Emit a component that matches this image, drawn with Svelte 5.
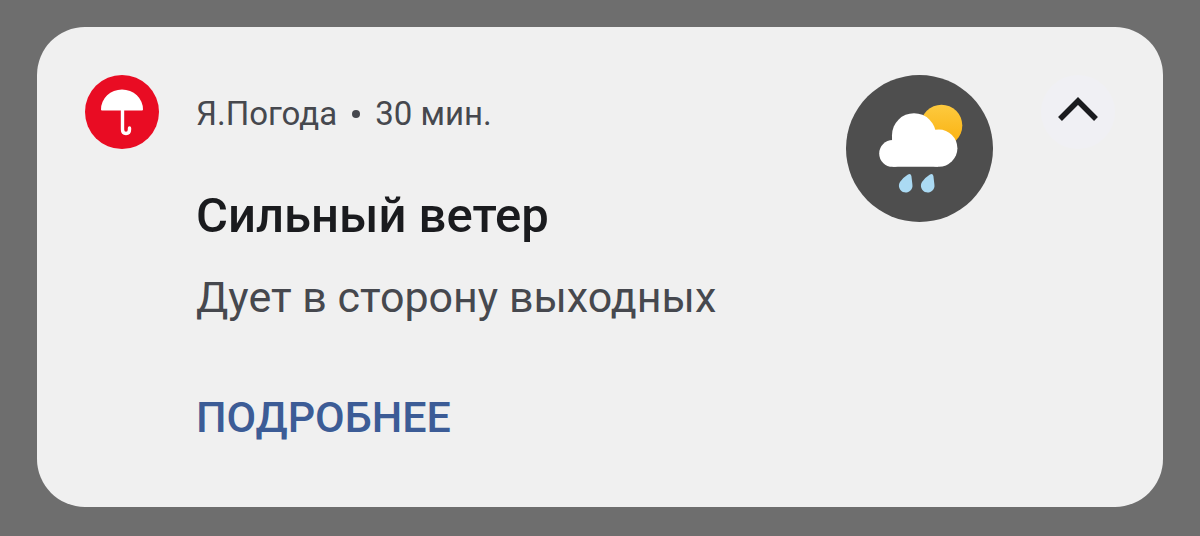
<svelte:options runes={true} />

<script>
  let expanded = $state(true);
</script>

<main class="shade">
  <article class="card">
    <svg class="app-icon" viewBox="0 0 74 74" aria-hidden="true">
      <circle cx="37" cy="37" r="37" fill="#e90c23" />
      <path d="M16 34.5a21 20 0 0 1 42 0q0 1-1 1H17q-1 0-1-1z" fill="#fff" />
      <path d="M37.5 34v20.500q0 4 3.500 4t3.500-4v-1.500" fill="none" stroke="#fff" stroke-width="3.400" stroke-linecap="round" />
    </svg>

    <div class="content">
      <p class="meta"><span>Я.Погода</span><span class="dot"></span><span>30 мин.</span></p>
      <h1>Сильный ветер</h1>
      <p class="message">Дует в сторону выходных</p>
      <a class="more" href="#details">ПОДРОБНЕЕ</a>
    </div>

    <svg class="weather" viewBox="0 0 147 147" aria-hidden="true">
      <defs>
        <linearGradient id="sun" x1="0" y1="0" x2="0" y2="1">
          <stop offset="0" stop-color="#fdca3f" />
          <stop offset="1" stop-color="#fab00d" />
        </linearGradient>
      </defs>
      <circle cx="73.500" cy="73.500" r="73.500" fill="#4e4e4e" />
      <circle cx="95.500" cy="50.500" r="20.800" fill="url(#sun)" />
      <g fill="#fff">
        <circle cx="68" cy="60.200" r="22" />
        <circle cx="46.600" cy="78.400" r="13.400" />
        <circle cx="92.800" cy="73.200" r="18.600" />
        <path d="M46 60H70l22 12v19.800H46.600z" />
      </g>
      <g fill="#abdaf3">
        <path id="drop" d="M61.600 99.800Q64.600 97.800 65.400 101L66.400 109.500A6.800 6.800 0 1 1 54 107Q56.500 103 61.600 99.800z" />
        <use href="#drop" x="22" />
      </g>
    </svg>

    <button class="toggle" aria-label="Свернуть" aria-expanded={expanded} onclick={() => (expanded = !expanded)}>
      <svg viewBox="0 0 48 48" aria-hidden="true"><path d="M6 31 24 13l18 18" /></svg>
    </button>
  </article>
</main>

<style>
  :global(body) { margin: 0; background: #6e6e6e; }
  .shade { padding: 27px 37px 29px; font-family: Roboto, sans-serif; }
  .card { display: flex; align-items: flex-start; box-sizing: border-box; padding: 48px 48px 64px; border-radius: 48px; background: #f0f0f0; }
  .app-icon { flex: none; width: 74px; height: 74px; }
  .content { flex: 1; min-width: 0; margin-left: 37px; }
  p, h1 { margin: 0; }
  .meta { display: flex; align-items: center; height: 78px; color: #46484e; font-size: 33px; line-height: 40px; }
  .dot { width: 8px; height: 8px; margin: 0 15px; border-radius: 50%; background: #46484e; }
  h1 { margin-top: 34px; color: #1a1b1e; font-size: 49px; font-weight: 500; line-height: 58px; }
  .message { margin-top: 26px; color: #46484e; font-size: 43px; line-height: 52px; }
  .more { display: inline-block; margin-top: 68px; color: #3c5c96; font-size: 43px; font-weight: 500; line-height: 52px; text-decoration: none; }
  .weather { flex: none; width: 147px; height: 147px; }
  .toggle { flex: none; display: flex; align-items: center; justify-content: center; width: 74px; height: 74px; margin: 0 0 0 48px; padding: 0; border: 0; border-radius: 50%; background: #f0f0f4; cursor: pointer; }
  .toggle svg { width: 48px; height: 48px; fill: none; stroke: #1a1b1e; stroke-width: 5.500; }
</style>
